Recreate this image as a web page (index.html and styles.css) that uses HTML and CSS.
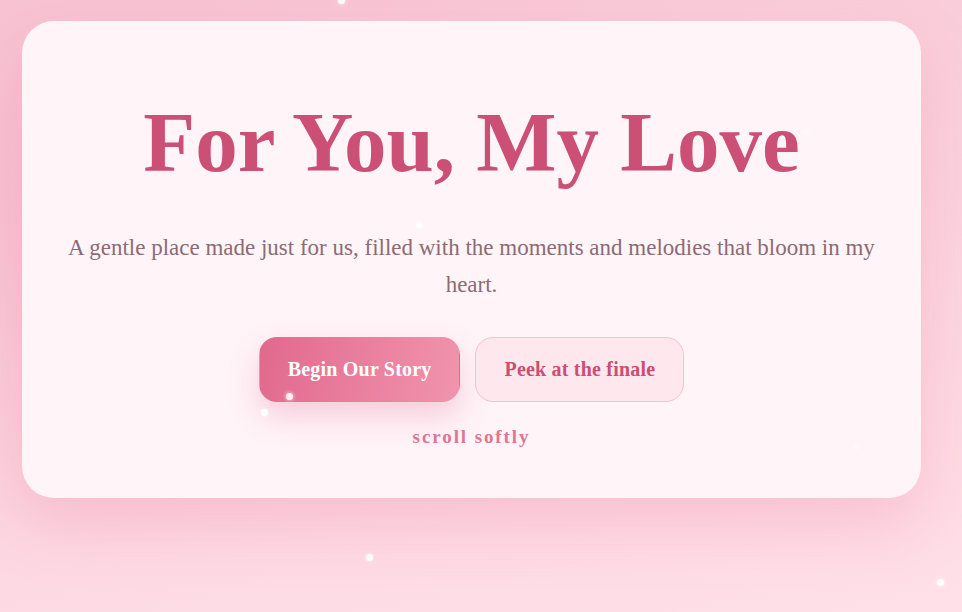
FILE: index.html
```html
<!DOCTYPE html>
<html lang="en">
<head>
  <meta charset="UTF-8">
  <meta name="viewport" content="width=device-width, initial-scale=1.0">
  <title>For You, My Love</title>
  <link rel="stylesheet" href="styles.css">
</head>
<body>

  <div class="sparkles">
    <span class="spark" style="left:338px;top:-3px"></span>
    <span class="spark" style="left:416px;top:221px"></span>
    <span class="spark" style="left:286px;top:393px"></span>
    <span class="spark" style="left:261px;top:409px"></span>
    <span class="spark" style="left:366px;top:554px"></span>
    <span class="spark" style="left:937px;top:579px"></span>
    <span class="spark faint" style="left:853px;top:443px"></span>
    <span class="spark faint" style="left:803px;top:129px"></span>
  </div>

  <main class="page">
    <section class="hero">
      <h1 class="hero-title">For You, My Love</h1>
      <p class="hero-text">A gentle place made just for us, filled with the moments and melodies that bloom in my heart.</p>

      <div class="hero-actions">
        <button class="btn btn-primary">Begin Our Story</button>
        <button class="btn btn-ghost">Peek at the finale</button>
      </div>

      <p class="scroll-hint">scroll softly</p>
    </section>
  </main>

</body>
</html>
```

FILE: styles.css
```css
html,
body {
  height: 100%;
}

body {
  margin: 0;
  font-family: "Liberation Serif", "Times New Roman", serif;
  background:
    radial-gradient(ellipse at 10% 30%, rgba(244, 182, 201, 0.6), transparent 60%),
    linear-gradient(170deg, #f8c8d6 0%, #fbd3de 50%, #ffe0e8 100%);
  overflow: hidden;
}

.page {
  padding: 21px 41px 0 22px;
}

.hero {
  background: #fff4f8;
  border-radius: 32px;
  box-shadow: 0 28px 60px rgba(236, 130, 160, 0.28);
  padding: 70px 40px 50px;
  text-align: center;
}

.hero-title {
  margin: 0;
  font-size: 85px;
  font-weight: bold;
  line-height: 103px;
  color: #cc5075;
}

.hero-text {
  margin: 35px 0 0;
  font-size: 23px;
  line-height: 37px;
  color: #8c6b73;
}

.hero-actions {
  display: flex;
  justify-content: center;
  gap: 15px;
  margin-top: 34px;
}

.btn {
  font-family: inherit;
  font-size: 20px;
  font-weight: bold;
  line-height: 23px;
  letter-spacing: 0.2px;
  padding: 20px 28px;
  border-radius: 18px;
  cursor: pointer;
}

.btn-primary {
  color: #fff;
  border: 1px solid transparent;
  background: linear-gradient(100deg, #e1698e 0%, #f194ad 100%);
  box-shadow: 0 14px 30px rgba(228, 110, 148, 0.3);
}

.btn-ghost {
  color: #c94f74;
  background: #fee8ee;
  border: 1px solid #f6c0d0;
}

.scroll-hint {
  margin: 24px 0 0;
  font-size: 19px;
  font-weight: bold;
  letter-spacing: 1.9px;
  color: #e07595;
}

.sparkles {
  position: fixed;
  inset: 0;
  pointer-events: none;
  z-index: 2;
}

.spark {
  position: absolute;
  width: 7px;
  height: 7px;
  border-radius: 50%;
  background: #fff;
  opacity: 0.9;
  box-shadow: 0 0 4px rgba(255, 255, 255, 0.9);
}

.spark.faint {
  opacity: 0.4;
}
```
